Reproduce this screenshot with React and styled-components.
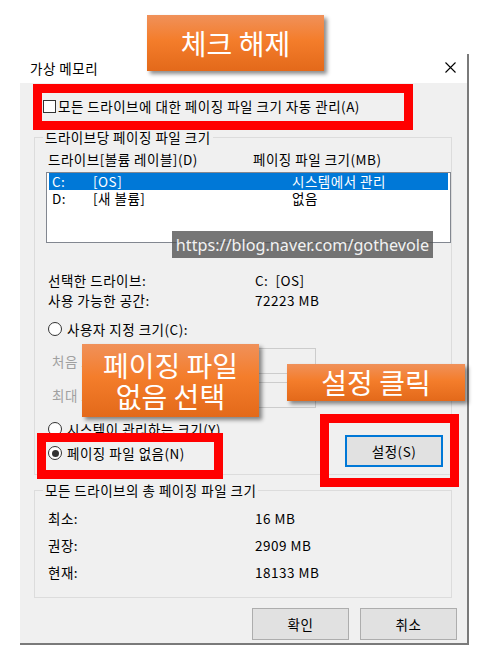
import React from "react";
import styled, { createGlobalStyle } from "styled-components";

const GlobalStyle = createGlobalStyle`
  html, body { margin: 0; padding: 0; background: #fff; }
  body { font-family: "Noto Sans CJK KR", "Noto Sans", sans-serif; color: #000; }
  * { box-sizing: border-box; }
`;

const Stage = styled.div`
  position: relative;
  width: 480px;
  height: 652px;
  overflow: hidden;
  padding: 54px 0 0 20px;
`;

const Dialog = styled.div`
  width: 449px;
  height: 591px;
  display: flex;
  flex-direction: column;
  border-right: 2px solid #7a7a7a;
  border-bottom: 2px solid #7a7a7a;
  font-size: 13.5px;
  letter-spacing: 0.5px;
  line-height: 16px;
`;

const TitleBar = styled.div`
  height: 29px;
  flex: none;
  display: flex;
  align-items: center;
  justify-content: space-between;
  padding: 0 11px 2px 10px;
  background: #fff;
`;

const Body = styled.div`
  flex: 1;
  background: #f0f0f0;
  padding: 15px 10px 0 14px;
  display: flex;
  flex-direction: column;
`;

const CheckRow = styled.label`
  display: flex;
  align-items: center;
  gap: 2px;
  margin-left: 9px;
  height: 16px;
`;

const CheckBox = styled.span`
  width: 13px;
  height: 13px;
  border: 1px solid #333;
  background: #fff;
  flex: none;
`;

const Group = styled.fieldset`
  margin: ${(p) => p.$mt}px 5px 0 0;
  border: 1px solid #dcdcdc;
  padding: 0 0 ${(p) => p.$pb}px 0;
  min-width: 0;
`;

const Legend = styled.legend`
  padding: 0 2px;
  margin-left: 8px;
  line-height: 16px;
`;

const GroupInner = styled.div`
  padding-left: 11px;
  display: flex;
  flex-direction: column;
`;

const HeaderRow = styled.div`
  display: grid;
  grid-template-columns: 205px 1fr;
  padding-left: 2px;
  margin-top: 6px;
`;

const ListBox = styled.div`
  margin-top: 5px;
  height: 71px;
  border: 1px solid #828790;
  background: #fff;
  padding: 0 2px;
`;

const ListRow = styled.div`
  display: grid;
  grid-template-columns: 41px 199px 1fr;
  height: 17px;
  line-height: 17px;
  padding-left: 3px;
  background: ${(p) => (p.$selected ? "#0078d7" : "transparent")};
  color: ${(p) => (p.$selected ? "#fff" : "#000")};
`;

const InfoGrid = styled.div`
  display: grid;
  grid-template-columns: 207px 1fr;
  row-gap: ${(p) => p.$gap}px;
  padding-left: 2px;
  margin-top: ${(p) => p.$mt}px;
`;

const RadioOption = styled.label`
  display: flex;
  align-items: center;
  gap: 5px;
  padding-left: 2px;
  margin-top: ${(p) => p.$mt || 0}px;
  height: 16px;
`;

const RadioDot = styled.span`
  width: 14px;
  height: 14px;
  border-radius: 50%;
  border: 1px solid #333;
  background: #fff;
  flex: none;
  display: flex;
  align-items: center;
  justify-content: center;
  &::after {
    content: "";
    width: 7px;
    height: 7px;
    border-radius: 50%;
    background: ${(p) => (p.$checked ? "#333" : "transparent")};
  }
`;

const SizeRow = styled.div`
  display: grid;
  grid-template-columns: 201px 63px;
  align-items: center;
  padding-left: 6px;
  margin-top: ${(p) => p.$mt}px;
  color: #a0a0a0;
`;

const SizeInput = styled.div`
  height: 26px;
  border: 1px solid #cccccc;
  background: #f0f0f0;
`;

const BottomRow = styled.div`
  display: flex;
  justify-content: space-between;
  align-items: flex-end;
  margin-top: 13px;
`;

const RadioColumn = styled.div`
  display: flex;
  flex-direction: column;
  gap: 8px;
  padding-bottom: 6px;
`;

const Button = styled.button`
  width: ${(p) => p.$w}px;
  height: 32px;
  font: inherit;
  letter-spacing: inherit;
  color: #000;
  background: #e1e1e1;
  border: ${(p) => (p.$focused ? "2px solid #0078d7" : "1px solid #adadad")};
  padding: 0;
  margin-right: ${(p) => p.$mr || 0}px;
`;

const ButtonRow = styled.div`
  display: flex;
  justify-content: flex-end;
  gap: 11px;
  margin-top: 10px;
`;

const Callout = styled.div`
  position: absolute;
  left: ${(p) => p.$x}px;
  top: ${(p) => p.$y}px;
  width: ${(p) => p.$w}px;
  height: ${(p) => p.$h}px;
  background: linear-gradient(#f0915a 0%, #f47d2b 45%, #e3691a 100%);
  box-shadow: 3px 3px 4px rgba(0, 0, 0, 0.45);
  color: #fff;
  font-family: "Noto Sans CJK KR", sans-serif;
  font-size: 28px;
  line-height: 31px;
  text-align: center;
  display: flex;
  align-items: center;
  justify-content: center;
`;

const RedBox = styled.div`
  position: absolute;
  left: ${(p) => p.$x}px;
  top: ${(p) => p.$y}px;
  width: ${(p) => p.$w}px;
  height: ${(p) => p.$h}px;
  border: 9px solid #ff0000;
`;

const Watermark = styled.div`
  position: absolute;
  left: 172px;
  top: 231px;
  width: 261px;
  height: 27px;
  background: rgba(80, 80, 80, 0.78);
  color: #f2f2f2;
  font-family: "Noto Sans", sans-serif;
  font-size: 16.2px;
  display: flex;
  align-items: center;
  justify-content: center;
`;

const CloseIcon = () => (
  <svg width="11" height="11" viewBox="0 0 11 11">
    <path d="M0.5 0.5 L10.5 10.5 M10.5 0.5 L0.5 10.5" stroke="#000" strokeWidth="1.1" fill="none" />
  </svg>
);

export default function App() {
  return (
    <>
      <GlobalStyle />
      <Stage>
        <Dialog>
          <TitleBar>
            <span>가상 메모리</span>
            <CloseIcon />
          </TitleBar>
          <Body>
            <CheckRow>
              <CheckBox />
              <span>모든 드라이브에 대한 페이징 파일 크기 자동 관리(A)</span>
            </CheckRow>

            <Group $mt={15} $pb={7}>
              <Legend>드라이브당 페이징 파일 크기</Legend>
              <GroupInner>
                <HeaderRow>
                  <span>드라이브[볼륨 레이블](D)</span>
                  <span>페이징 파일 크기(MB)</span>
                </HeaderRow>
                <ListBox>
                  <ListRow $selected>
                    <span>C:</span>
                    <span>[OS]</span>
                    <span>시스템에서 관리</span>
                  </ListRow>
                  <ListRow>
                    <span>D:</span>
                    <span>[새 볼륨]</span>
                    <span>없음</span>
                  </ListRow>
                </ListBox>
                <InfoGrid $mt={29} $gap={4}>
                  <span>선택한 드라이브:</span>
                  <span>C:&nbsp;&nbsp;[OS]</span>
                  <span>사용 가능한 공간:</span>
                  <span>72223 MB</span>
                </InfoGrid>
                <RadioOption $mt={13}>
                  <RadioDot />
                  <span>사용자 지정 크기(C):</span>
                </RadioOption>
                <SizeRow $mt={11}>
                  <span>처음 크기(MB):</span>
                  <SizeInput />
                </SizeRow>
                <SizeRow $mt={8}>
                  <span>최대 크기(MB):</span>
                  <SizeInput />
                </SizeRow>
                <BottomRow>
                  <RadioColumn>
                    <RadioOption>
                      <RadioDot />
                      <span>시스템이 관리하는 크기(Y)</span>
                    </RadioOption>
                    <RadioOption>
                      <RadioDot $checked />
                      <span>페이징 파일 없음(N)</span>
                    </RadioOption>
                  </RadioColumn>
                  <Button $w={98} $focused $mr={8}>설정(S)</Button>
                </BottomRow>
              </GroupInner>
            </Group>

            <Group $mt={7} $pb={17}>
              <Legend>모든 드라이브의 총 페이징 파일 크기</Legend>
              <GroupInner>
                <InfoGrid $mt={12} $gap={11}>
                  <span>최소:</span>
                  <span>16 MB</span>
                  <span>권장:</span>
                  <span>2909 MB</span>
                  <span>현재:</span>
                  <span>18133 MB</span>
                </InfoGrid>
              </GroupInner>
            </Group>

            <ButtonRow>
              <Button $w={97}>확인</Button>
              <Button $w={97}>취소</Button>
            </ButtonRow>
          </Body>
        </Dialog>

        <Watermark>https://blog.naver.com/gothevole</Watermark>

        <RedBox $x={33} $y={84} $w={380} $h={46} />
        <RedBox $x={37} $y={433} $w={186} $h={46} />
        <RedBox $x={320} $y={414} $w={139} $h={73} />

        <Callout $x={147} $y={15} $w={177} $h={56}>체크 해제</Callout>
        <Callout $x={82} $y={344} $w={177} $h={73}>
          페이징 파일
          <br />
          없음 선택
        </Callout>
        <Callout $x={287} $y={364} $w={178} $h={37}>설정 클릭</Callout>
      </Stage>
    </>
  );
}
